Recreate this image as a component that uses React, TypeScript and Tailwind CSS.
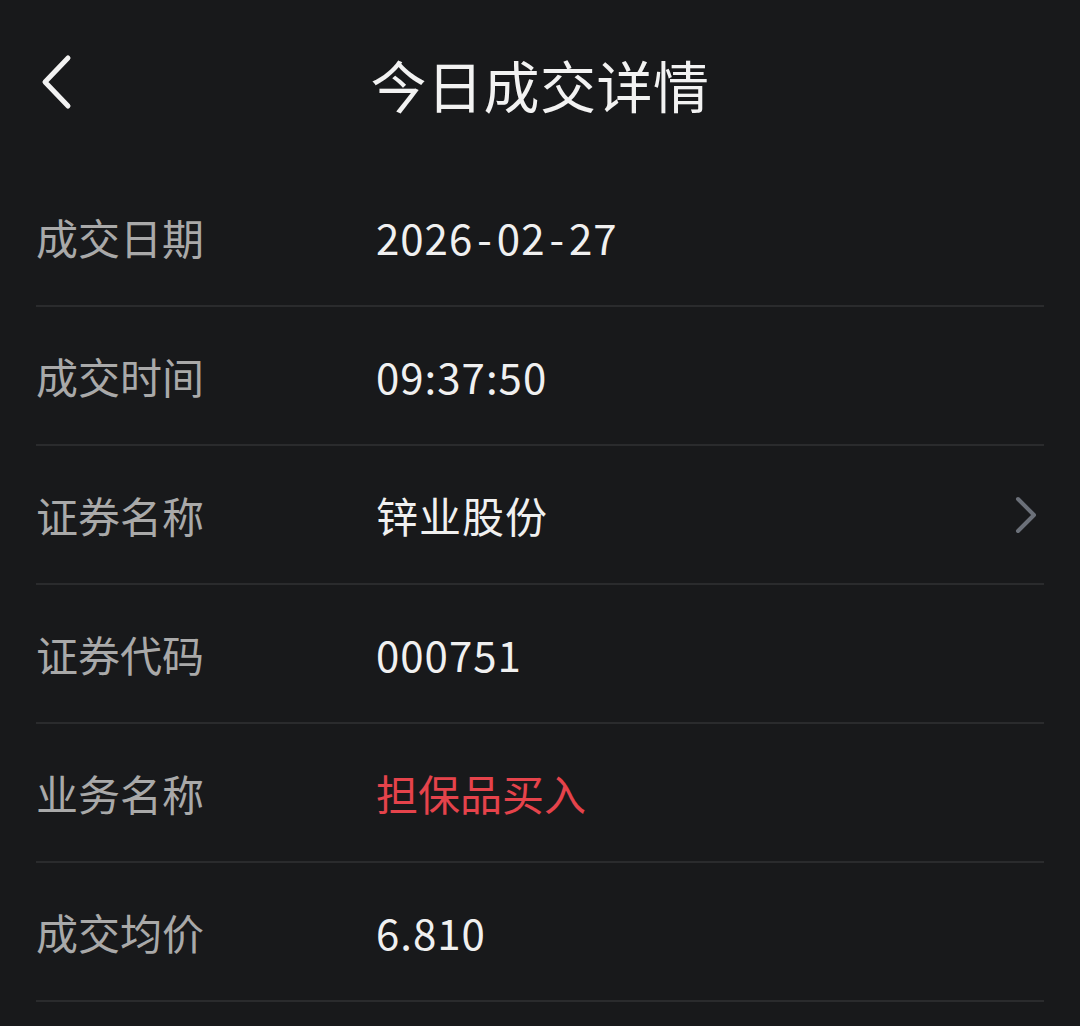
const rows: { label: string; value: string; tone?: 'red'; link?: boolean }[] = [
  { label: '成交日期', value: '2026-02-27' },
  { label: '成交时间', value: '09:37:50' },
  { label: '证券名称', value: '锌业股份', link: true },
  { label: '证券代码', value: '000751' },
  { label: '业务名称', value: '担保品买入', tone: 'red' },
  { label: '成交均价', value: '6.810' },
];

// hyphens in the date sit wider apart than the font gives
function renderValue(value: string) {
  if (!value.includes('-')) return value;
  const parts = value.split('-');
  return parts.map((part, i) => (
    <span key={i}>
      {part}
      {i < parts.length - 1 ? <span className="mx-[4px]">-</span> : null}
    </span>
  ));
}

export default function App() {
  return (
    <div
      className="min-h-[1026px] w-[1080px] overflow-hidden bg-[#18191b]"
      style={{ fontFamily: '"Noto Sans CJK SC", "Noto Sans", sans-serif' }}
    >
      <header className="relative flex h-[168px] items-center justify-center">
        <button className="absolute left-[36px] top-[52px] flex h-[62px] w-[40px] items-center justify-center">
          <svg width="36" height="60" viewBox="0 0 36 60" fill="none">
            <path
              d="M30 5 L7 29 L30 53"
              stroke="#f2f2f2"
              strokeWidth="5"
              strokeLinecap="round"
              strokeLinejoin="round"
            />
          </svg>
        </button>
        <h1 className="text-[56px] font-normal leading-none tracking-[0.5px] text-[#f2f2f2]">
          今日成交详情
        </h1>
      </header>

      <div className="px-[36px]">
        {rows.map((row) => (
          <div
            key={row.label}
            className="flex h-[139px] items-center border-b-2 border-[#2a2b2d]"
          >
            <div className="w-[340px] text-[42px] leading-none text-[#a9a9a9]">
              {row.label}
            </div>
            <div
              className={
                row.tone === 'red'
                  ? 'flex-1 text-[42px] leading-none text-[#e5434b]'
                  : 'flex-1 text-[42px] leading-none tracking-[1px] text-[#f0f0f0]'
              }
            >
              {renderValue(row.value)}
            </div>
            {row.link ? (
              <svg width="28" height="40" viewBox="0 0 28 40" fill="none" className="mr-[4px]">
                <path
                  d="M6 4 L22 20 L6 36"
                  stroke="#6b7079"
                  strokeWidth="4"
                  strokeLinecap="round"
                  strokeLinejoin="round"
                />
              </svg>
            ) : null}
          </div>
        ))}
      </div>
    </div>
  );
}
